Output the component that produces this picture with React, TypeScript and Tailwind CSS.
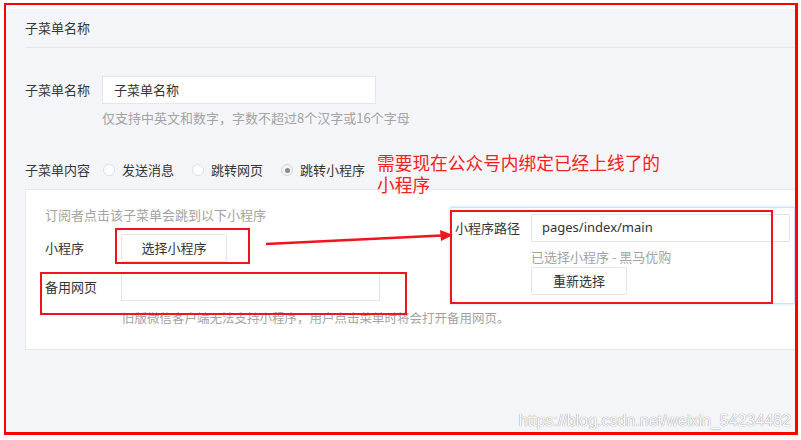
import React from "react";

function Radio({ label, checked }: { label: string; checked?: boolean }) {
  return (
    <div className="flex items-center mr-[18px]">
      <span
        className={`w-[12px] h-[12px] rounded-full border flex items-center justify-center ${
          checked ? "border-[#d3d6db] bg-[#f3f3f3]" : "border-[#dcdfe6] bg-white"
        }`}
      >
        {checked && <span className="w-[5px] h-[5px] rounded-full bg-[#8a8a8a]" />}
      </span>
      <span className="ml-[7px] text-[13px] text-[#353535]">{label}</span>
    </div>
  );
}

export default function App() {
  return (
    <div className="relative w-[801px] h-[440px] bg-white overflow-hidden font-['Noto_Sans_CJK_SC',sans-serif]">
      {/* 截图外框 */}
      <div className="ml-[4px] mt-[3px] w-[794px] h-[432px] border-l-2 border-t-2 border-r-[3px] border-b-[3px] border-[#ff0000] pt-[4px] bg-white">
        <div className="h-full bg-[#f4f5f9] pl-[19px]">
          <div className="h-[39px] flex items-center border-b border-[#e3e5ea] text-[13px] text-[#353535]">
            子菜单名称
          </div>

          <div className="mt-[28px] flex items-center">
            <div className="w-[77px] text-[13px] text-[#353535]">子菜单名称</div>
            <div className="w-[274px] h-[28px] bg-white border border-[#e4e6ea] flex items-center pl-[11px] text-[13px] text-[#333]">
              子菜单名称
            </div>
          </div>
          <div className="mt-[5px] pl-[77px] leading-[18px] text-[13px] text-[#a3a3a3]">
            仅支持中英文和数字，字数不超过8个汉字或16个字母
          </div>

          <div className="mt-[33px] h-[20px] flex items-center">
            <div className="w-[78px] text-[13px] text-[#353535]">子菜单内容</div>
            <Radio label="发送消息" />
            <Radio label="跳转网页" />
            <Radio label="跳转小程序" checked />
          </div>

          <div className="relative mt-[9px] h-[161px] bg-white border border-r-0 border-[#e6e8ec] pt-[16px] pl-[19px]">
            <div className="leading-[18px] text-[13px] text-[#a3a3a3]">订阅者点击该子菜单会跳到以下小程序</div>

            <div className="mt-[10px] flex items-center">
              <div className="w-[76px] text-[13px] text-[#353535]">小程序</div>
              <button className="w-[106px] h-[28px] bg-white border border-[#e4e6ea] rounded-[2px] text-[13px] text-[#333]">
                选择小程序
              </button>
            </div>

            <div className="mt-[11px] flex items-center">
              <div className="w-[76px] text-[13px] text-[#353535]">备用网页</div>
              <div className="w-[259px] h-[28px] bg-white border border-[#e4e6ea]" />
            </div>
            <div className="mt-[8px] pl-[77px] leading-[18px] text-[12.5px] text-[#a3a3a3]">
              旧版微信客户端无法支持小程序，用户点击菜单时将会打开备用网页。
            </div>

            {/* 小程序路径弹层 */}
            <div className="absolute left-[424px] top-[17px] w-[345px] h-[97px] bg-white border border-[#cfe2f8] shadow-[0_0_3px_rgba(90,160,240,0.35)] pt-[6px] pl-[4px]">
              <div className="flex items-start">
                <div className="w-[76px] leading-[28px] text-[13px] text-[#353535]">小程序路径</div>
                <div className="w-[259px] h-[28px] border border-[#e4e6ea] flex items-center pl-[10px] font-['Noto_Sans',sans-serif] text-[13px] text-[#333]">
                  pages/index/main
                </div>
              </div>
              <div className="ml-[76px] mt-[6px] leading-[18px] text-[13px] text-[#a3a3a3]">已选择小程序 - 黑马优购</div>
              <button className="ml-[76px] mt-[1px] w-[96px] h-[28px] bg-white border border-[#e4e6ea] rounded-[2px] text-[13px] text-[#333]">
                重新选择
              </button>
            </div>
          </div>
        </div>
      </div>

      {/* 标注 */}
      <div className="absolute left-[115px] top-[228px] w-[135px] h-[36px] border-2 border-[#f0141c]" />
      <div className="absolute left-[40px] top-[272px] w-[367px] h-[43px] border-2 border-[#f0141c]" />
      <div className="absolute left-[450px] top-[210px] w-[323px] h-[94px] border-2 border-[#f0141c]" />

      <svg className="absolute left-0 top-0 pointer-events-none" width="801" height="440">
        <line x1="266" y1="244" x2="442" y2="235.6" stroke="#f0141c" strokeWidth="2.5" />
        <polygon points="453,235 440,230 441,241" fill="#f0141c" />
      </svg>

      <div className="absolute left-[377px] top-[151px] leading-[22px] text-[17.7px] text-[#f52020]">
        需要现在公众号内绑定已经上线了的
        <br />
        小程序
      </div>

      <div className="absolute right-[10px] top-[410px] leading-[22px] text-[16px] font-['Liberation_Sans',sans-serif] text-white [text-shadow:0_0_1px_rgba(0,0,0,0.4),0_0_1px_rgba(0,0,0,0.25)]">
        https://blog.csdn.net/weixin_54234482
      </div>
    </div>
  );
}
